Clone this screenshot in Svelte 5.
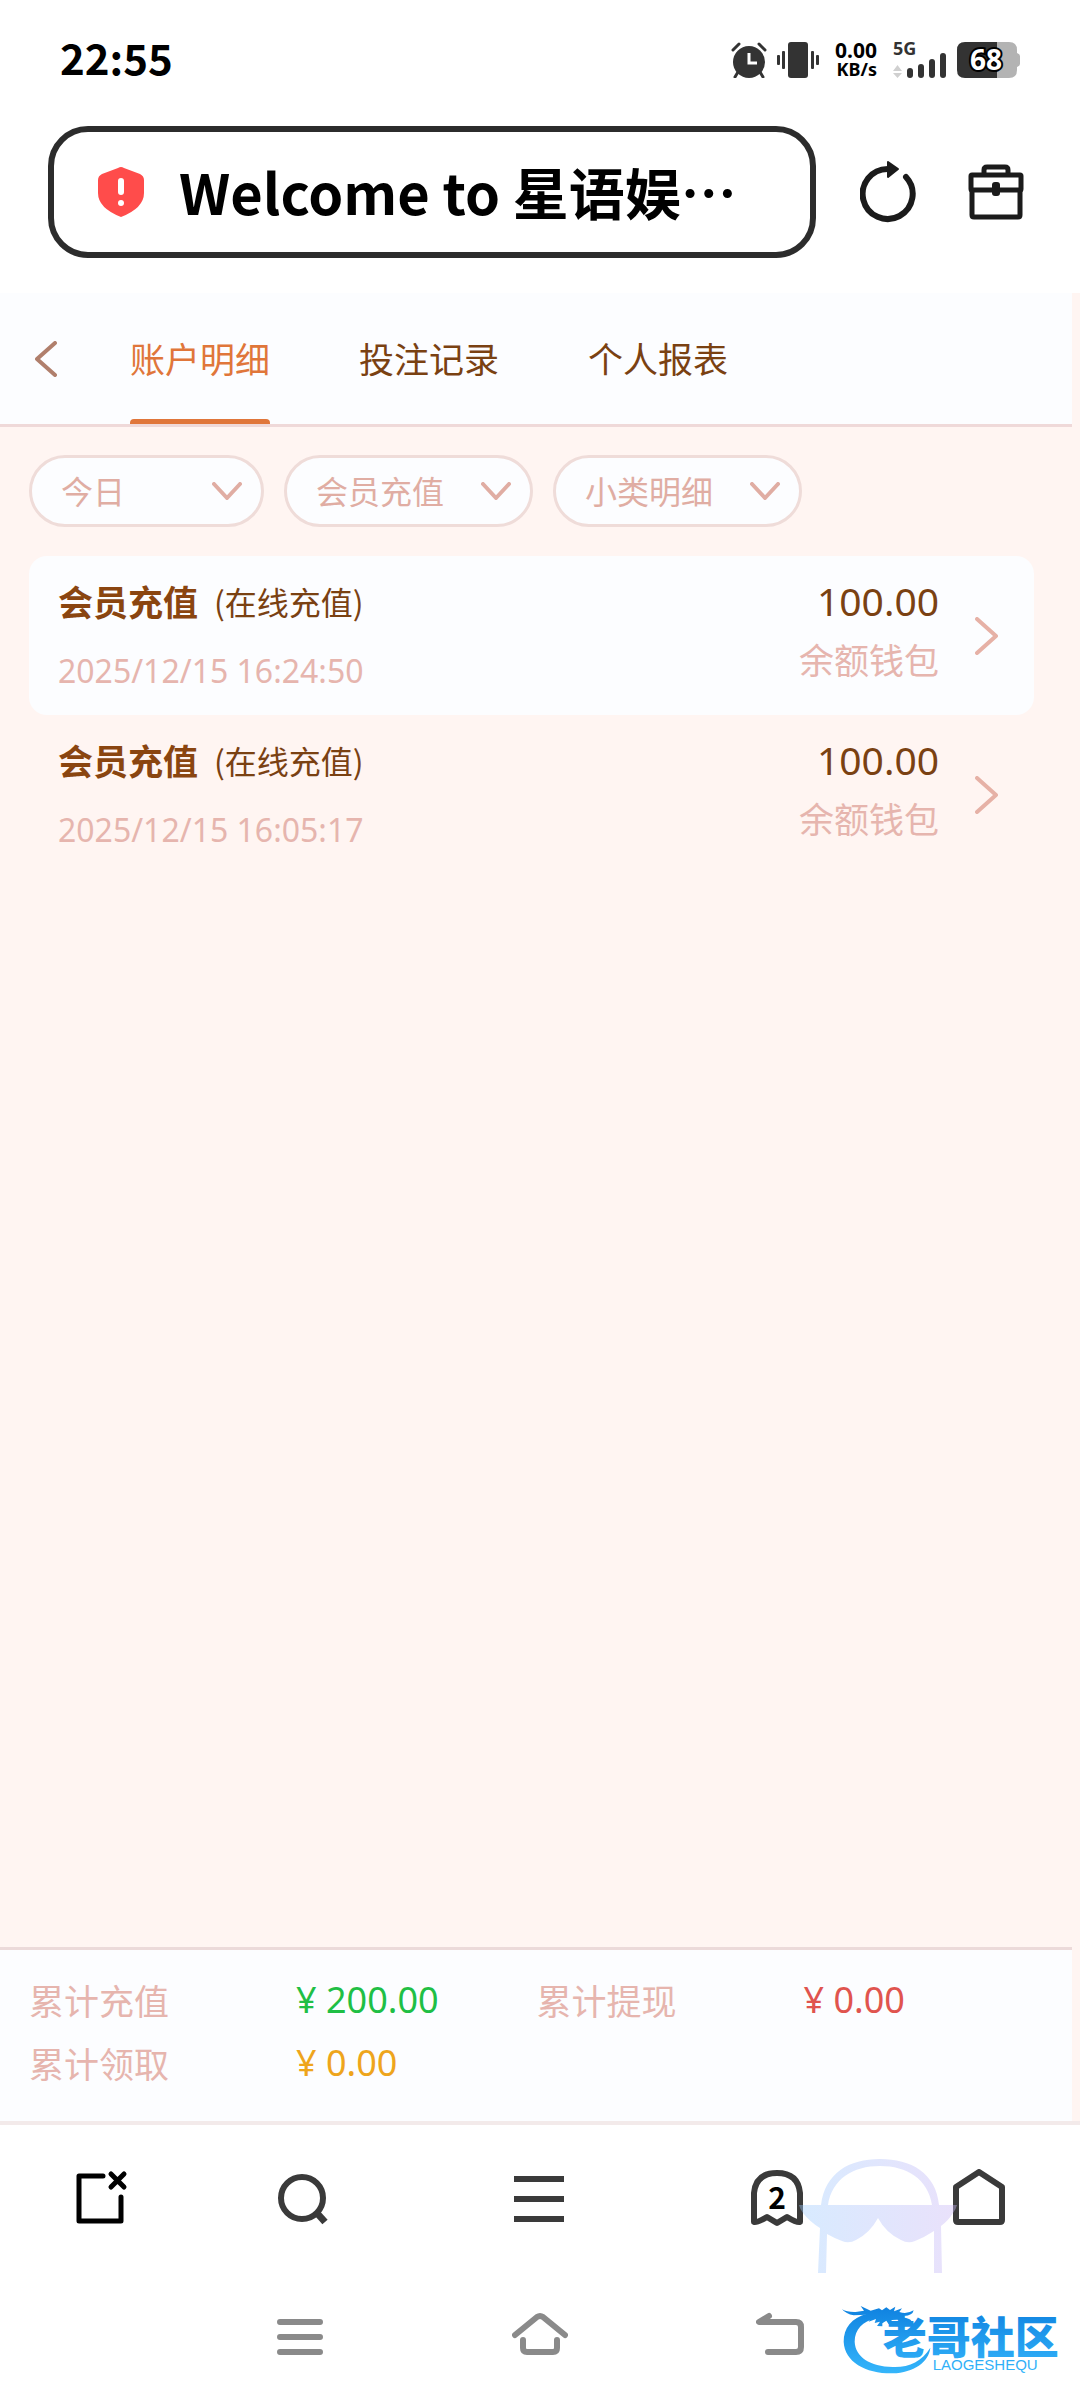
<script>
    const tabs = ["账户明细", "投注记录", "个人报表"];
    let activeTab = $state(0);

    const filters = [
        { id: "date", label: "日期", value: "今日", size: "short" },
        { id: "type", label: "类型", value: "会员充值", size: "" },
        { id: "detail", label: "明细", value: "小类明细", size: "" },
    ];

    const records = [
        {
            title: "会员充值",
            note: "(在线充值)",
            time: "2025/12/15 16:24:50",
            amount: "100.00",
            wallet: "余额钱包",
        },
        {
            title: "会员充值",
            note: "(在线充值)",
            time: "2025/12/15 16:05:17",
            amount: "100.00",
            wallet: "余额钱包",
        },
    ];

    const totals = [
        { label: "累计充值", value: "¥ 200.00", tone: "green" },
        { label: "累计提现", value: "¥ 0.00", tone: "red" },
        { label: "累计领取", value: "¥ 0.00", tone: "orange" },
    ];
</script>

<div class="screen">
    <div class="status">
        <span class="status__time">22:55</span>
        <div class="status__icons">
            <svg width="36" height="36" viewBox="0 0 36 36">
                <circle cx="18" cy="20" r="16" fill="#333" />
                <path d="M2 8L8 2M34 8L28 2M7 30L4 35M29 30L32 35" stroke="#333" stroke-width="3" fill="none" stroke-linecap="round" />
                <path d="M18 11V21H26" stroke="#fff" stroke-width="3" fill="none" />
            </svg>
            <svg width="42" height="36" viewBox="0 0 42 36" fill="#333">
                <rect x="11" width="20" height="36" rx="3" />
                <rect x="5" y="9" width="3" height="18" rx="1" />
                <rect x="34" y="9" width="3" height="18" rx="1" />
                <rect y="13" width="3" height="10" rx="1" />
                <rect x="39" y="13" width="3" height="10" rx="1" />
            </svg>
            <div class="status__speed">
                <span class="status__rate">0.00</span>
                <span>KB/s</span>
            </div>
            <svg width="54" height="52" viewBox="0 -8 54 52" fill="#333">
                <text class="status__net" x="0" y="13">5G</text>
                <path d="M0 29L4.500 23L9 29ZM0 31H9L4.500 36Z" fill="#d0d0d0" />
                <rect x="14" y="26" width="6" height="10" rx="3" />
                <rect x="25" y="22" width="6" height="14" rx="3" />
                <rect x="36" y="17" width="6" height="19" rx="3" />
                <rect x="47" y="11" width="6" height="25" rx="3" />
            </svg>
            <svg width="63" height="48" viewBox="0 -6 63 48">
                <path d="M40 0H52Q60 0 60 8V11Q63 12 63 14V22Q63 24 60 25V28Q60 36 52 36H40Z" fill="#b3b3b3" />
                <path d="M40 0H8Q0 0 0 8V28Q0 36 8 36H40Z" fill="#333" />
                <text class="status__battery" x="29" y="28" text-anchor="middle">68</text>
            </svg>
        </div>
    </div>

    <div class="address">
        <div class="address__box">
            <svg width="46" height="50" viewBox="0 0 46 50">
                <path d="M20 1Q23 -1 26 1L42 7Q46 9 46 13V26Q46 41 23 50Q0 41 0 26V13Q0 9 4 7Z" fill="#ff4c4b" />
                <path d="M23 14V25" stroke="#fff" stroke-width="6" stroke-linecap="round" />
                <circle cx="23" cy="36" r="3" fill="#fff" />
            </svg>
            <input type="text" aria-label="网址" value="Welcome to 星语娱…" />
        </div>
        <div class="address__actions">
            <button aria-label="刷新">
                <svg width="56" height="64" viewBox="0 0 56 64">
                    <path d="M28 9A25 25 0 1 0 46 17" fill="none" stroke="#1b1b1b" stroke-width="6" stroke-linecap="round" />
                    <path d="M28 2L38 9L28 17Z" fill="#1b1b1b" stroke="#1b1b1b" stroke-width="2" stroke-linejoin="round" />
                </svg>
            </button>
            <button aria-label="工具箱">
                <svg width="56" height="56" viewBox="0 0 56 56" fill="none" stroke="#1b1b1b" stroke-width="5" stroke-linejoin="round">
                    <path d="M16 10V6Q16 3 19 3H37Q40 3 40 6V10" />
                    <rect x="3" y="11" width="50" height="15" rx="1" />
                    <path d="M4 26V51Q4 53 6 53H50Q52 53 52 51V26" />
                    <rect x="24" y="18" width="8" height="14" rx="3" fill="#1b1b1b" stroke="none" />
                </svg>
            </button>
        </div>
    </div>

    <main class="page">
        <header class="tabs">
            <button class="tabs__back" aria-label="返回">
                <svg width="22" height="36" viewBox="0 0 22 36">
                    <path d="M20 2L2 18L20 34" fill="none" stroke="#b07f6c" stroke-width="4" stroke-linecap="round" stroke-linejoin="round" />
                </svg>
            </button>
            {#each tabs as tab, i}
                <button
                    class="tabs__item"
                    class:active={activeTab === i}
                    onclick={() => (activeTab = i)}>{tab}</button
                >
            {/each}
        </header>

        <div class="filters">
            {#each filters as filter}
                <div class="filter {filter.size}">
                    <select id={filter.id} aria-label={filter.label}>
                        <option>{filter.value}</option>
                    </select>
                    <svg width="30" height="18" viewBox="0 0 30 18">
                        <path d="M2 2L15 16L28 2" fill="none" stroke="#e0ada3" stroke-width="4" stroke-linecap="round" stroke-linejoin="round" />
                    </svg>
                </div>
            {/each}
        </div>

        <ul class="records">
            {#each records as record}
                <li>
                    <button class="record">
                        <span class="record__info">
                            <span class="record__title"
                                ><b>{record.title}</b><span>{record.note}</span></span
                            >
                            <span class="record__time">{record.time}</span>
                        </span>
                        <span class="record__sum">
                            <span class="record__amount">{record.amount}</span>
                            <span class="record__wallet">{record.wallet}</span>
                        </span>
                        <svg width="24" height="38" viewBox="0 0 24 38">
                            <path d="M2 2L21 19L2 36" fill="none" stroke="#e6b1a6" stroke-width="4" stroke-linecap="round" stroke-linejoin="round" />
                        </svg>
                    </button>
                </li>
            {/each}
        </ul>

        <dl class="totals">
            {#each totals as total}
                <div class="totals__item">
                    <dt>{total.label}</dt>
                    <dd class={total.tone}>{total.value}</dd>
                </div>
            {/each}
        </dl>
    </main>

    <footer class="bottom">
        <nav class="toolbar">
            <button aria-label="关闭页面">
                <svg width="52" height="58" viewBox="0 0 52 58" fill="none" stroke="#000" stroke-width="5" stroke-linecap="round" stroke-linejoin="round">
                    <path d="M27 7H3V52H45V28" />
                    <path d="M35 5L48 18M48 5L35 18" />
                </svg>
            </button>
            <button aria-label="搜索">
                <svg width="52" height="58" viewBox="0 0 52 58" fill="none" stroke="#3a3a3a" stroke-width="6">
                    <circle cx="25" cy="29" r="21" />
                    <path d="M39 43L48 53" stroke-width="7" />
                </svg>
            </button>
            <button aria-label="菜单">
                <svg width="50" height="58" viewBox="0 0 50 58" fill="#3a3a3a">
                    <rect y="7" width="50" height="6" />
                    <rect y="27" width="50" height="6" />
                    <rect y="47" width="50" height="6" />
                </svg>
            </button>
            <button aria-label="标签页">
                <svg width="52" height="58" viewBox="0 0 52 58">
                    <path d="M3 53V24Q5 4 26 4Q47 4 49 24V53Q46 54 36 48L26 54L16 48Q6 54 3 53Z" fill="#fff" stroke="#3a3a3a" stroke-width="6" stroke-linejoin="round" />
                    <text class="toolbar__count" x="26" y="40" text-anchor="middle">2</text>
                </svg>
            </button>
            <button aria-label="主页">
                <svg width="52" height="58" viewBox="0 0 52 58">
                    <path d="M26 3L49 18V51Q49 53 47 53H5Q3 53 3 51V18Z" fill="none" stroke="#3a3a3a" stroke-width="6" stroke-linejoin="round" />
                </svg>
            </button>
        </nav>
        <nav class="system">
            <button aria-label="最近任务">
                <svg width="46" height="44" viewBox="0 0 46 44" stroke="#8a8a8a" stroke-width="6" stroke-linecap="round">
                    <path d="M3 10H43M3 25H43M3 40H43" />
                </svg>
            </button>
            <button aria-label="桌面">
                <svg width="56" height="44" viewBox="0 0 56 44" fill="none" stroke="#8a8a8a" stroke-width="6" stroke-linecap="round" stroke-linejoin="round">
                    <path d="M3 23L25 5Q28 3 31 5L53 23" />
                    <path d="M11 28V36Q11 40 15 40H41Q45 40 45 36V28" />
                </svg>
            </button>
            <button aria-label="后退">
                <svg width="48" height="44" viewBox="0 0 48 44" fill="none" stroke="#8a8a8a" stroke-width="6" stroke-linecap="round" stroke-linejoin="round">
                    <path d="M13 4L3 10H40Q45 10 45 15V35Q45 40 40 40H12" />
                </svg>
            </button>
        </nav>

        <svg class="mask" width="158" height="114" viewBox="0 0 158 114">
            <defs>
                <linearGradient id="maskFill" x1="0" x2="1">
                    <stop offset="0" stop-color="#9cccff" />
                    <stop offset="1" stop-color="#c9b4f5" />
                </linearGradient>
            </defs>
            <path
                d="M22 46C26 14 50 0 81 0S137 14 140 46H158Q157 50 154 54Q149 62 142 67L143 114H135L135 72Q126 78 116 82Q109 85 102 81Q87 74 79 59Q71 74 57 81Q50 85 43 82Q35 79 28 75L27 114H19L21 69Q11 63 4 54Q1 50 0 46ZM29 46H133C129 20 108 7 81 7S33 20 29 46Z"
                fill="url(#maskFill)"
                fill-rule="evenodd"
                opacity="0.4"
            />
        </svg>

        <svg class="brand" width="228" height="74" viewBox="60 65 684 222">
            <defs>
                <linearGradient id="brandFill" gradientUnits="userSpaceOnUse" x1="0" y1="80" x2="0" y2="280">
                    <stop offset="0" stop-color="#0f82e0" />
                    <stop offset="1" stop-color="#35b6fb" />
                </linearGradient>
            </defs>
            <g fill="url(#brandFill)">
                <path d="M142 100C94 112 71 144 71 184C74 246 138 280 218 279C282 276 326 246 331 202C304 244 266 262 218 260C150 258 106 230 104 184C104 146 128 124 168 112Z" />
                <path d="M66 87Q82 96 107 95L132 91L122 77L152 91L177 84L186 90L199 81L210 89L226 79L222 93L246 84L238 95Q260 103 281 90Q278 106 252 107L250 112Q268 113 274 121Q270 133 250 131L256 126L232 118L216 119L206 132L199 121L187 129L187 138L171 137L180 124L164 128L168 116L146 124L153 112L126 112L140 103L101 105Q78 101 66 87Z" />
                <text class="brand__name" x="188" y="222">老哥社区</text>
                <text class="brand__latin" x="338" y="268">LAOGESHEQU</text>
            </g>
        </svg>
    </footer>
</div>

<style>
    :global(body) {
        background: #fff;
    }

    .screen {
        display: flex;
        flex-direction: column;
        min-height: 100vh;
        font-family: "Noto Sans CJK SC", sans-serif;
        color: #7a4112;
    }

    svg {
        display: block;
        flex: none;
    }

    button {
        padding: 0;
        border: 0;
        background: none;
        font: inherit;
        color: inherit;
        cursor: pointer;
    }

    .status {
        display: flex;
        align-items: center;
        justify-content: space-between;
        height: 120px;
        padding: 0 60px;
        color: #000;
    }

    .status__time {
        padding-bottom: 8px;
        font-size: 42px;
        font-weight: 700;
    }

    .status__icons {
        display: flex;
        align-items: center;
        gap: 10px;
    }

    .status__speed {
        display: flex;
        flex-direction: column;
        align-items: flex-end;
        margin: 0 6px;
        font: 700 18px/19px "Noto Sans", sans-serif;
    }

    .status__rate {
        font-size: 21px;
    }

    .status__net {
        font: 700 18px "Noto Sans", sans-serif;
    }

    .status__battery {
        font: 700 28px "Noto Sans", sans-serif;
        fill: #fff;
        stroke: #000;
        stroke-width: 4px;
        paint-order: stroke;
    }

    .address {
        display: flex;
        align-items: center;
        gap: 44px;
        padding: 6px 56px 35px 48px;
    }

    .address__box {
        display: flex;
        flex: 1;
        align-items: center;
        gap: 35px;
        min-width: 0;
        height: 120px;
        padding: 0 44px;
        border: 6px solid #2c2c2c;
        border-radius: 40px;
    }

    .address__box input {
        flex: 1;
        min-width: 0;
        padding: 0 0 4px;
        border: 0;
        outline: 0;
        background: none;
        color: #000;
        font: 700 56px "Noto Sans CJK SC", sans-serif;
    }

    .address__actions {
        display: flex;
        align-items: center;
        gap: 52px;
    }

    .page {
        display: flex;
        flex: 1;
        flex-direction: column;
        background: #fff5f2;
    }

    .tabs {
        display: flex;
        gap: 89px;
        height: 131px;
        margin-right: 8px;
        padding-left: 35px;
        border-bottom: 3px solid #efd9d9;
        background: #fcfdff;
    }

    .tabs__back {
        margin-right: -16px;
    }

    .tabs__item {
        padding-bottom: 3px;
        font-size: 35px;
    }

    .tabs__item.active {
        position: relative;
        color: #e0763a;
    }

    .tabs__item.active::after {
        content: "";
        position: absolute;
        right: 0;
        bottom: 0;
        left: 0;
        height: 5px;
        border-radius: 4px 4px 0 0;
        background: #e0763a;
    }

    .filters {
        display: flex;
        gap: 20px;
        padding: 28px 29px 29px;
    }

    .filter {
        display: grid;
        align-items: center;
        width: 249px;
    }

    .filter.short {
        width: 235px;
    }

    .filter select,
    .filter svg {
        grid-area: 1 / 1;
    }

    .filter select {
        box-sizing: border-box;
        width: 100%;
        height: 72px;
        padding: 0 60px 3px 29px;
        border: 3px solid #efdcd9;
        border-radius: 36px;
        appearance: none;
        background: #fcfdff;
        color: #e0ada3;
        font: 32px "Noto Sans CJK SC", sans-serif;
    }

    .filter svg {
        justify-self: end;
        margin-right: 22px;
        pointer-events: none;
    }

    .records {
        flex: 1;
        margin: 0;
        padding: 0 46px 0 29px;
        list-style: none;
    }

    .record {
        display: flex;
        align-items: center;
        width: 100%;
        padding: 21px 35px 20px 29px;
        border-radius: 18px;
        text-align: left;
    }

    li:nth-child(odd) .record {
        background: #fcfdff;
    }

    .record__info,
    .record__sum {
        display: flex;
        flex-direction: column;
        line-height: 48px;
    }

    .record__info {
        flex: 1;
        gap: 22px;
    }

    .record__title {
        display: flex;
        gap: 16px;
        font-size: 32px;
    }

    .record__title b {
        color: #8a4510;
        font-size: 35px;
    }

    .record__time {
        color: #e6b5ae;
        font-family: "Noto Sans", sans-serif;
        font-size: 32px;
    }

    .record__sum {
        align-self: flex-start;
        align-items: flex-end;
        gap: 10px;
        margin-right: 36px;
    }

    .record__amount {
        font-family: "Noto Sans", sans-serif;
        font-size: 39px;
    }

    .record__wallet {
        color: #e6b5ae;
        font-size: 35px;
    }

    .totals {
        display: grid;
        grid-template-columns: 1fr 1fr;
        margin: 0 8px 0 0;
        padding: 18px 28px 27px 29px;
        border-top: 3px solid #ecdada;
        background: #fcfdff;
        font-size: 35px;
        line-height: 63px;
    }

    .totals__item {
        display: grid;
        grid-template-columns: 267px 1fr;
    }

    .totals dt {
        color: #e6b5ae;
    }

    .totals dd {
        margin: 0;
        font-family: "Noto Sans", sans-serif;
        font-size: 36px;
    }

    .green {
        color: #1fbf45;
    }

    .red {
        color: #e0544e;
    }

    .orange {
        color: #eea51c;
    }

    .bottom {
        position: relative;
        border-top: 4px solid #f3eaea;
        background: #fff;
    }

    .toolbar {
        display: grid;
        grid-template-columns: 204fr 198fr 274fr 202fr 202fr;
        padding: 44px 0;
    }

    .toolbar button,
    .system button {
        justify-self: center;
    }

    .toolbar__count {
        font: 700 30px "Noto Sans CJK SC", sans-serif;
    }

    .system {
        display: grid;
        grid-template-columns: repeat(3, 1fr);
        padding: 41px calc(100% / 6) 44px;
    }

    .mask {
        position: absolute;
        top: 34px;
        right: 123px;
        pointer-events: none;
    }

    .brand {
        position: absolute;
        right: 12px;
        bottom: 24px;
        pointer-events: none;
    }

    .brand__name {
        font: 900 132px "Noto Sans CJK SC", sans-serif;
    }

    .brand__latin {
        font: 45px "Liberation Sans", sans-serif;
    }
</style>
